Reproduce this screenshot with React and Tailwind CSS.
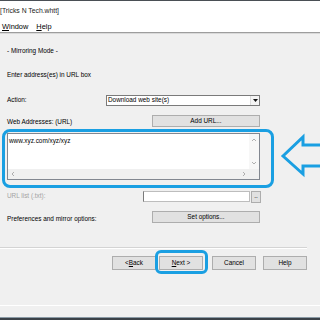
import React from 'react';

// Annotation colour used for the highlight boxes and the arrow
const BLUE = '#1a9fe2';

const WinButton = ({ className = '', children }) => (
  <div
    className={`flex items-center justify-center bg-[#e1e1e1] border border-[#adadad] text-[6.4px] leading-none text-black ${className}`}
  >
    {children}
  </div>
);

const Chevron = ({ dir }) => {
  const paths = {
    up: 'M1 4 L3 2 L5 4',
    down: 'M1 2 L3 4 L5 2',
    left: 'M4 1 L2 3 L4 5',
    right: 'M2 1 L4 3 L2 5',
  };
  return (
    <svg width="6" height="6" viewBox="0 0 6 6">
      <path d={paths[dir]} fill="none" stroke="#a6a6a6" strokeWidth="0.9" />
    </svg>
  );
};

export default function App() {
  return (
    <div
      className="relative w-[320px] h-[320px] overflow-hidden bg-[#f0f0f0] flex flex-col text-black"
      style={{ fontFamily: '"Liberation Sans", Arial, sans-serif' }}
    >
      {/* window edge */}
      <div className="h-[1px] bg-[#4a4f55]" />

      {/* title + menu */}
      <div className="h-[31px] bg-white flex flex-col">
        <div className="h-[20px] flex items-center text-[6.8px] leading-none text-[#1a1a1a]">
          [Tricks N Tech.whtt]
        </div>
        <div className="h-[11px] flex items-center gap-[8px] pl-[2px] text-[7.4px] leading-none">
          <span><u>W</u>indow</span>
          <span><u>H</u>elp</span>
        </div>
      </div>
      <div className="h-[1px] bg-[#9d9d9d]" />
      <div className="h-[1px] bg-[#d9d9d9]" />

      {/* wizard page */}
      <div className="flex flex-col pl-[7px] pr-[60px] text-[6.4px] leading-none">
        <div className="mt-[12px] h-[10px] flex items-center">- Mirroring Mode -</div>
        <div className="mt-[14px] h-[10px] flex items-center">Enter address(es) in URL box</div>

        <div className="mt-[15px] h-[11px] flex items-center">
          <div className="w-[99px]">Action:</div>
          <div className="flex-1 h-full flex bg-white border border-[#7a7a7a]">
            <div className="flex-1 flex items-center pl-[1px]">Download web site(s)</div>
            <div className="w-[9px] flex items-center justify-center bg-[#f4f4f4] border-l border-[#dcdcdc]">
              <svg width="5" height="3" viewBox="0 0 5 3">
                <path d="M0 0 H5 L2.5 3 Z" fill="#111" />
              </svg>
            </div>
          </div>
        </div>

        <div className="mt-[9px] h-[12px] flex items-center">
          <div className="flex-1 pt-[3px]">Web Addresses: (URL)</div>
          <WinButton className="w-[108px] h-full">Add URL...</WinButton>
        </div>

        {/* URL text box with scrollbars */}
        <div className="mt-[6px] h-[47px] flex flex-col bg-white border border-[#828790]">
          <div className="flex-1 flex">
            <div className="flex-1 pl-[1px] pt-[4px]">www.xyz.com/xyz/xyz</div>
            <div className="w-[10px] flex flex-col items-center justify-between py-[3px] bg-[#f7f7f7]">
              <Chevron dir="up" />
              <Chevron dir="down" />
            </div>
          </div>
          <div className="h-[10px] flex bg-[#f0f0f0]">
            <div className="flex-1 flex items-center justify-between px-[2px]">
              <Chevron dir="left" />
              <Chevron dir="right" />
            </div>
            <div className="w-[10px] bg-[#f0f0f0]" />
          </div>
        </div>

        <div className="mt-[11px] h-[11px] flex items-center">
          <div className="flex-1 text-[#a3a3a3]">URL list (.txt):</div>
          <div className="w-[107px] h-full bg-white border border-[#bdbdbd] border-l-[#7a7a7a]" />
          <WinButton className="ml-[1px] mr-[-1px] w-[10px] h-[12px]">..</WinButton>
        </div>

        <div className="mt-[9px] h-[12px] flex items-center">
          <div className="flex-1 pt-[4px]">Preferences and mirror options:</div>
          <WinButton className="w-[108px] h-full">Set options...</WinButton>
        </div>
      </div>

      {/* etched separator */}
      <div className="mt-[24px] w-[307px] h-[2px] flex flex-col">
        <div className="h-[1px] bg-[#d4d4d4]" />
        <div className="h-[1px] bg-white" />
      </div>

      {/* wizard buttons */}
      <div className="mt-[7px] h-[14px] flex justify-end pr-[13px]">
        <WinButton className="w-[44px]">&lt; <u>B</u>ack</WinButton>
        <WinButton className="ml-[3px] w-[44px]"><u>N</u>ext &gt;</WinButton>
        <WinButton className="ml-[9px] w-[44px]">Cancel</WinButton>
        <WinButton className="ml-[7px] w-[44px]">Help</WinButton>
      </div>

      {/* bottom edge */}
      <div className="mt-auto flex flex-col">
        <div className="h-[1px] bg-white" />
        <div className="h-[11px]" />
        <div className="h-[1px] bg-[#8a9aa5]" />
        <div className="h-[2px] bg-[#3a4148]" />
      </div>

      {/* annotations */}
      <div
        className="absolute left-[2px] top-[129px] w-[272px] h-[59px] rounded-[8px] border-[3px]"
        style={{ borderColor: BLUE }}
      />
      <div
        className="absolute left-[155px] top-[250px] w-[53px] h-[24px] rounded-[6px] border-[3px]"
        style={{ borderColor: BLUE }}
      />
      <svg
        className="absolute left-[278px] top-[132px]"
        width="42"
        height="46"
        viewBox="278 132 42 46"
      >
        <polygon
          points="283,156 303,137 303,145 323,145 323,166 303,166 303,174"
          fill="none"
          stroke={BLUE}
          strokeWidth="3"
        />
      </svg>
    </div>
  );
}
